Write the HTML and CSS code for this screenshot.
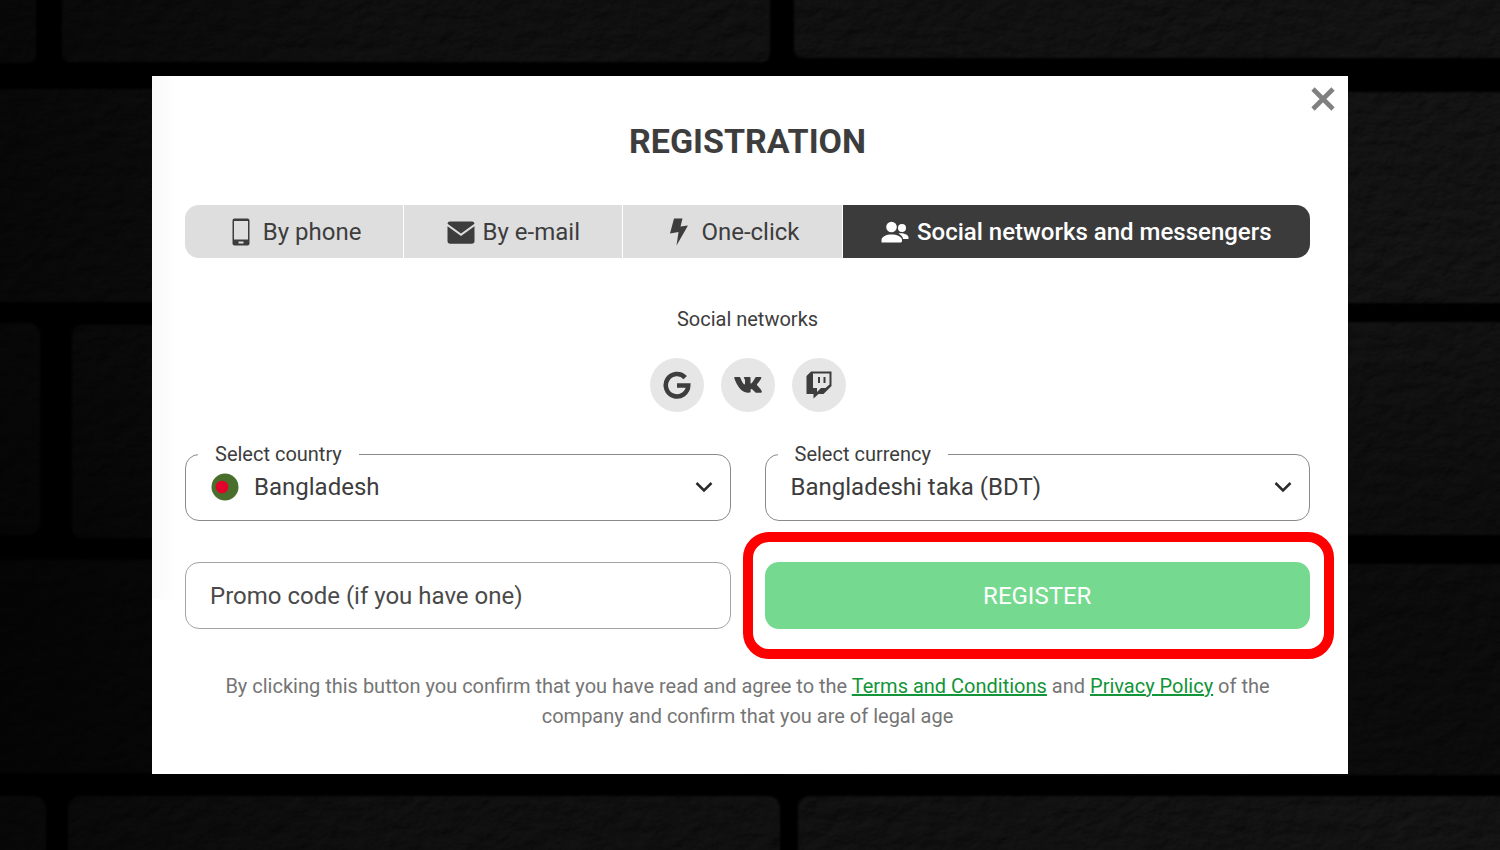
FILE: index.html
```html
<!DOCTYPE html>
<html lang="en">
<head>
  <meta charset="UTF-8">
  <title>Registration</title>
  <meta name="viewport" content="width=device-width, initial-scale=1.0">
  <link rel="stylesheet" href="styles.css">
</head>
<body>

  <!-- Brick wall -->
  <svg class="wall" viewBox="0 0 1500 850" preserveAspectRatio="xMidYMid slice" aria-hidden="true">
    <defs>
      <filter id="stone" x="0" y="0" width="1500" height="850" filterUnits="userSpaceOnUse" color-interpolation-filters="sRGB">
        <feTurbulence type="fractalNoise" baseFrequency="0.05 0.07" numOctaves="5" seed="8" result="noise"/>
        <feDiffuseLighting in="noise" surfaceScale="2" lighting-color="#181818" result="light">
          <feDistantLight azimuth="235" elevation="50"/>
        </feDiffuseLighting>
        <feGaussianBlur in="SourceAlpha" stdDeviation="1" result="shape"/>
        <feComposite in="light" in2="shape" operator="in"/>
      </filter>
      <linearGradient id="shade" x1="0" y1="0" x2="1" y2="0">
        <stop offset="0" stop-color="#000" stop-opacity="0.6"/>
        <stop offset="0.25" stop-color="#000" stop-opacity="0.2"/>
        <stop offset="1" stop-color="#000" stop-opacity="0"/>
      </linearGradient>
      <linearGradient id="fade" x1="0" y1="0" x2="0" y2="1">
        <stop offset="0.3" stop-color="#000" stop-opacity="0"/>
        <stop offset="0.7" stop-color="#000" stop-opacity="0.4"/>
        <stop offset="0.91" stop-color="#000" stop-opacity="0.4"/>
        <stop offset="0.93" stop-color="#000" stop-opacity="0"/>
      </linearGradient>
    </defs>
    <rect width="1500" height="850" fill="#000"/>
    <g filter="url(#stone)">
      <rect x="-30" y="-20" width="66" height="83" rx="8"/>
      <rect x="62" y="-20" width="708" height="82" rx="8"/>
      <rect x="794" y="-20" width="740" height="78" rx="8"/>
      <rect x="-30" y="89" width="780" height="213" rx="8"/>
      <rect x="780" y="92" width="760" height="211" rx="8"/>
      <rect x="-30" y="323" width="70" height="212" rx="12"/>
      <rect x="72" y="325" width="700" height="213" rx="10"/>
      <rect x="800" y="322" width="740" height="213" rx="8"/>
      <rect x="-30" y="560" width="780" height="213" rx="8"/>
      <rect x="780" y="564" width="760" height="211" rx="8"/>
      <rect x="-30" y="796" width="76" height="80" rx="12"/>
      <rect x="68" y="796" width="712" height="80" rx="12"/>
      <rect x="798" y="796" width="740" height="80" rx="12"/>
    </g>
    <rect width="1500" height="850" fill="url(#shade)"/>
    <rect width="1500" height="850" fill="url(#fade)"/>
  </svg>

  <main class="card">
    <button class="close" type="button" aria-label="Close">
      <svg viewBox="0 0 24 24" width="24" height="24"><path d="M2 2 22 22M22 2 2 22" fill="none" stroke="#808080" stroke-width="4.600"/></svg>
    </button>

    <h1>REGISTRATION</h1>

    <!-- Ways to register -->
    <nav class="tabs">
      <button class="tab" type="button">
        <svg class="icon" viewBox="0 0 28 28"><path fill-rule="evenodd" d="M7.500.500h13a2 2 0 0 1 2 2v23a2 2 0 0 1-2 2h-13a2 2 0 0 1-2-2v-23a2 2 0 0 1 2-2zM7 3v18.500h14V3zM11.500 23.500v2h5v-2z"/></svg>
        By phone
      </button>
      <button class="tab" type="button">
        <svg class="icon" viewBox="0 0 28 28"><path d="M3 3.500h22a2.500 2.500 0 0 1 2.500 2.300L14 15.500.500 5.800A2.500 2.500 0 0 1 3 3.500z"/><path d="M.500 8.300 14 18 27.500 8.300V23a2.800 2.800 0 0 1-2.800 2.800H3.300A2.800 2.800 0 0 1 .500 23z"/></svg>
        By e-mail
      </button>
      <button class="tab" type="button">
        <svg class="icon" viewBox="0 0 28 28"><path d="M9 .500h8.500L15.500 8.500 23 7.500 11.500 27.500 13.500 14 5 15.500z"/></svg>
        One-click
      </button>
      <button class="tab active" type="button">
        <svg class="icon" viewBox="0 0 28 28"><circle cx="10.500" cy="9" r="5.300"/><circle cx="21" cy="10" r="4"/><path d="M.500 24.500v-2.500c0-3.500 5-5.500 10-5.500s10.500 2 10.500 5.500v1.500l-1 1z"/><path d="M17.500 15.500c5-.700 10 1.300 10 4v1.500h-5.500c-.300-2.300-1.700-4.100-4.500-5.500z"/></svg>
        Social networks and messengers
      </button>
    </nav>

    <h2>Social networks</h2>
    <div class="socials">
      <a class="social" href="#google" aria-label="Google">
        <svg viewBox="0 0 28 28"><path d="M22.200 6.600A11.200 11.200 0 1 0 25.200 14.500H14" fill="none" stroke="#3d3d3d" stroke-width="4.600"/></svg>
      </a>
      <a class="social" href="#vk" aria-label="VK">
        <svg viewBox="0 0 28 28"><path d="M1.200 6h4c.700 0 1 .400 1.300 1.100 1 2.800 2.900 6.300 3.900 6.300.500 0 .600-.400.600-1.400V9.300C10.900 7.500 9.800 7.400 9.800 6.700c0-.400.400-.700.900-.700h4.900c.700 0 .900.400.900 1.200v4.500c0 .700.300.900.500.900.500 0 3-3.500 4-5.700.300-.600.700-.900 1.400-.900h4c.900 0 1.100.500.800 1.200-.900 2.200-4.300 6-4.300 6.500 0 .800 4.500 4.400 4.900 6.700.100.900-.500 1.400-1.300 1.400h-4.200c-1 0-3.800-3.800-4.800-3.800-.700 0-.9.400-.9 1.500v1.100c0 .800-.4 1.200-2 1.200C8 21.800 3.200 15.500.300 7.200.100 6.400.400 6 1.200 6z"/></svg>
      </a>
      <a class="social" href="#twitch" aria-label="Twitch">
        <svg viewBox="0 0 28 28"><path fill-rule="evenodd" d="M6 .500h20.500v14.500l-8 8h-5l-5 4.500V23H1.500V5zM8 2.500v14.500h4v4l4-4h4.500l4-3.500V2.500z"/><path d="M13 6h2v6h-2zM18.500 6h2v6h-2z"/></svg>
      </a>
    </div>

    <form class="form" action="#">
      <fieldset class="field">
        <legend><label for="country">Select country</label></legend>
        <div class="field-row">
          <svg class="flag" viewBox="0 0 28 28" aria-hidden="true"><circle cx="14" cy="14" r="13.500" fill="#4a6e2c"/><circle cx="11" cy="14" r="6.300" fill="#e4002b"/></svg>
          <select id="country">
            <option>Bangladesh</option>
          </select>
          <svg class="chevron" viewBox="0 0 18 18" aria-hidden="true"><path d="M1.500 5 9 12.500 16.500 5"/></svg>
        </div>
      </fieldset>
      <fieldset class="field">
        <legend><label for="currency">Select currency</label></legend>
        <div class="field-row">
          <select id="currency">
            <option>Bangladeshi taka (BDT)</option>
          </select>
          <svg class="chevron" viewBox="0 0 18 18" aria-hidden="true"><path d="M1.500 5 9 12.500 16.500 5"/></svg>
        </div>
      </fieldset>
      <input class="promo" type="text" aria-label="Promo code" placeholder="Promo code (if you have one)">
      <div class="register">
        <button type="submit">REGISTER</button>
      </div>
    </form>

    <p class="terms">By clicking this button you confirm that you have read and agree to the <a href="#terms">Terms and Conditions</a> and <a href="#privacy">Privacy Policy</a> of the company and confirm that you are of legal age</p>
  </main>

</body>
</html>
```

FILE: styles.css
```css
:root {
  --text: #3d3d3d;
  --muted: #757575;
  --tab: #dedede;
  --line: #8a8a8a;
  --green: #76d990;
  --link: #129438;
}

* {
  box-sizing: border-box;
}

body {
  margin: 0;
  min-height: 100vh;
  padding: 76px 152px;
  background: #000;
  color: var(--text);
  font-family: Roboto, sans-serif;
}

button, input, select {
  font-family: inherit;
  font-size: 24px;
  color: inherit;
}

button {
  border: none;
  padding: 0;
  cursor: pointer;
}

.wall {
  position: fixed;
  inset: 0;
  z-index: -1;
  width: 100%;
  height: 100%;
}

.card {
  position: relative;
  padding: 44px 38px 43px 33px;
  background: linear-gradient(90deg, #f9f9f9, #fff) no-repeat 0 0 / 24px 75% #fff;
}

.close {
  position: absolute;
  top: 11px;
  right: 13px;
  background: none;
}

.close svg {
  display: block;
}

h1 {
  margin: 0;
  font-size: 34px;
  line-height: 42px;
  text-align: center;
}

/* Tabs */
.tabs {
  display: grid;
  grid-template-columns: 218fr 218fr 218fr 467fr;
  gap: 1px;
  margin-top: 43px;
  border-radius: 14px;
  overflow: hidden;
}

.tab {
  display: flex;
  align-items: center;
  justify-content: center;
  gap: 8px;
  height: 53px;
  background: var(--tab);
  white-space: nowrap;
}

.tab.active {
  background: #3b3b3b;
  color: #fff;
  font-weight: 500;
}

.icon {
  width: 28px;
  height: 28px;
  fill: currentColor;
}

/* Social networks */
h2 {
  margin: 49px 0 0;
  font-size: 20px;
  font-weight: 400;
  line-height: 24px;
  text-align: center;
}

.socials {
  display: flex;
  justify-content: center;
  gap: 17px;
  margin-top: 27px;
}

.social {
  display: flex;
  align-items: center;
  justify-content: center;
  width: 54px;
  height: 54px;
  border-radius: 50%;
  background: #e6e6e6;
}

.social svg {
  width: 28px;
  height: 28px;
  fill: var(--text);
}

/* Form */
.form {
  display: grid;
  grid-template-columns: 1fr 1fr;
  gap: 41px 34px;
  margin-top: 30px;
}

.field {
  min-width: 0;
  margin: 0;
  padding: 0 17px 0 12px;
  border: 1px solid var(--line);
  border-radius: 14px;
}

legend {
  padding: 0 17px;
  font-size: 20px;
  line-height: 24px;
}

.field-row {
  display: flex;
  align-items: center;
  height: 54px;
  padding: 0 0 12px 13px;
}

.flag {
  width: 28px;
  height: 28px;
  margin-right: 15px;
}

select {
  flex: 1;
  min-width: 0;
  padding: 0;
  border: none;
  background: none;
  appearance: none;
}

.chevron {
  width: 18px;
  height: 18px;
  fill: none;
  stroke: #2b2b2b;
  stroke-width: 2.5;
}

.promo {
  width: 100%;
  height: 67px;
  padding: 0 24px;
  border: 1px solid #a3a3a3;
  border-radius: 14px;
  background: #fff;
}

.promo::placeholder {
  color: #4a4a4a;
  opacity: 1;
}

.register {
  position: relative;
}

.register button {
  width: 100%;
  height: 67px;
  border-radius: 14px;
  background: var(--green);
  color: #fff;
}

/* Red frame around the register button */
.register::after {
  content: "";
  position: absolute;
  inset: -30px -24px -30px -22px;
  border: 10px solid #f00;
  border-radius: 26px;
  pointer-events: none;
}

.terms {
  margin: 42px 0 0;
  font-size: 20px;
  line-height: 30px;
  text-align: center;
  color: var(--muted);
}

.terms a {
  color: var(--link);
}

@media (max-width: 1100px) {
  body {
    padding: 24px;
  }

  .tabs, .form {
    grid-template-columns: 1fr;
  }
}
```
